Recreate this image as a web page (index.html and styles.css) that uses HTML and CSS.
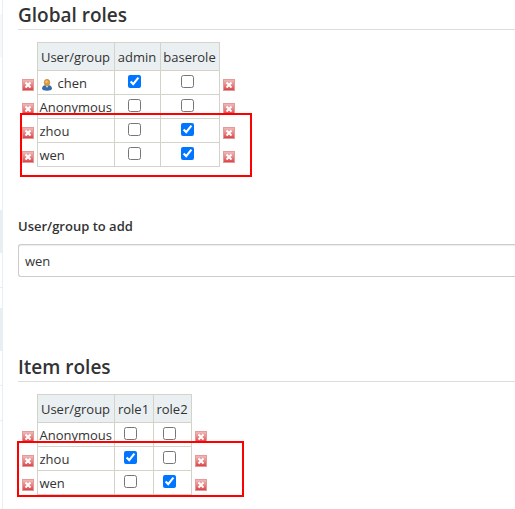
FILE: index.html
```
<!DOCTYPE html>
<html lang="en">
<head>
    <meta charset="UTF-8">
    <meta name="viewport" content="width=device-width, initial-scale=1.0">
    <title>Assign Roles</title>
    <link rel="stylesheet" href="styles.css">
</head>
<body>
    <!-- shared icons -->
    <svg class="sprite" aria-hidden="true">
        <defs>
            <linearGradient id="redFill" x1="0" y1="0" x2="0" y2="1">
                <stop offset="0" stop-color="#f0b8b8"/>
                <stop offset="0.5" stop-color="#e58585"/>
                <stop offset="1" stop-color="#dc4448"/>
            </linearGradient>
        </defs>
        <symbol id="remove" viewBox="0 0 12 12">
            <rect x="0" y="0" width="12" height="12" fill="#e59a9a"/>
            <rect x="1" y="1" width="10" height="10" fill="url(#redFill)"/>
            <path d="M3.500 3.500l5 5M8.500 3.500l-5 5" fill="none" stroke="#fff" stroke-width="2"/>
        </symbol>
        <symbol id="person" viewBox="0 0 12 12">
            <path d="M1 9.500C1 7 3 6 6 6s5 1 5 3.500C11 11 8.500 11.700 6 11.700S1 11 1 9.500z" fill="#3a6ca8"/>
            <path d="M4.500 6L6 9 7.500 6z" fill="#e8edf4"/>
            <ellipse cx="6" cy="3.500" rx="2.800" ry="3.200" fill="#dd9c3c" stroke="#b07a30" stroke-width="0.500"/>
            <ellipse cx="5.500" cy="2.800" rx="1.200" ry="1.200" fill="#f3c473"/>
        </symbol>
    </svg>

    <div class="page">
        <aside class="side-panel">
            <div class="side-gap first"></div>
            <div class="side-item faint"></div>
            <div class="side-gap large"></div>
            <div class="side-item"></div>
            <div class="side-row"></div>
            <div class="side-gap small"></div>
            <div class="side-item"></div>
            <div class="side-row"></div>
            <div class="side-row"></div>
        </aside>

        <main class="main-panel">
            <section class="roles">
                <h2>Global roles</h2>
                <div class="matrix">
                    <table class="global">
                        <colgroup>
                            <col class="col-icon"><col class="col-user"><col class="col-admin"><col class="col-base"><col class="col-icon">
                        </colgroup>
                        <thead>
                            <tr><td></td><th>User/group</th><th>admin</th><th>baserole</th><td></td></tr>
                        </thead>
                        <tbody>
                            <tr>
                                <td class="start"><button type="button" aria-label="Remove chen"><svg><use href="#remove"/></svg></button></td>
                                <td class="name"><svg class="person"><use href="#person"/></svg>chen</td>
                                <td class="check"><input type="checkbox" aria-label="admin for chen" checked></td>
                                <td class="check"><input type="checkbox" aria-label="baserole for chen"></td>
                                <td class="stop"><button type="button" aria-label="Remove chen"><svg><use href="#remove"/></svg></button></td>
                            </tr>
                            <tr>
                                <td class="start"><button type="button" aria-label="Remove Anonymous"><svg><use href="#remove"/></svg></button></td>
                                <td class="name">Anonymous</td>
                                <td class="check"><input type="checkbox" aria-label="admin for Anonymous"></td>
                                <td class="check"><input type="checkbox" aria-label="baserole for Anonymous"></td>
                                <td class="stop"><button type="button" aria-label="Remove Anonymous"><svg><use href="#remove"/></svg></button></td>
                            </tr>
                            <tr>
                                <td class="start"><button type="button" aria-label="Remove zhou"><svg><use href="#remove"/></svg></button></td>
                                <td class="name">zhou</td>
                                <td class="check"><input type="checkbox" aria-label="admin for zhou"></td>
                                <td class="check"><input type="checkbox" aria-label="baserole for zhou" checked></td>
                                <td class="stop"><button type="button" aria-label="Remove zhou"><svg><use href="#remove"/></svg></button></td>
                            </tr>
                            <tr>
                                <td class="start"><button type="button" aria-label="Remove wen"><svg><use href="#remove"/></svg></button></td>
                                <td class="name">wen</td>
                                <td class="check"><input type="checkbox" aria-label="admin for wen"></td>
                                <td class="check"><input type="checkbox" aria-label="baserole for wen" checked></td>
                                <td class="stop"><button type="button" aria-label="Remove wen"><svg><use href="#remove"/></svg></button></td>
                            </tr>
                        </tbody>
                    </table>
                    <div class="highlight highlight-global"></div>
                </div>
            </section>

            <div class="add-user">
                <label for="userToAdd">User/group to add</label>
                <input type="text" id="userToAdd" value="wen">
            </div>

            <section class="roles">
                <h2>Item roles</h2>
                <div class="matrix">
                    <table class="item">
                        <colgroup>
                            <col class="col-icon"><col class="col-user"><col class="col-role1"><col class="col-role2"><col class="col-icon">
                        </colgroup>
                        <thead>
                            <tr><td></td><th>User/group</th><th>role1</th><th>role2</th><td></td></tr>
                        </thead>
                        <tbody>
                            <tr>
                                <td class="start"><button type="button" aria-label="Remove Anonymous"><svg><use href="#remove"/></svg></button></td>
                                <td class="name">Anonymous</td>
                                <td class="check"><input type="checkbox" aria-label="role1 for Anonymous"></td>
                                <td class="check"><input type="checkbox" aria-label="role2 for Anonymous"></td>
                                <td class="stop"><button type="button" aria-label="Remove Anonymous"><svg><use href="#remove"/></svg></button></td>
                            </tr>
                            <tr>
                                <td class="start"><button type="button" aria-label="Remove zhou"><svg><use href="#remove"/></svg></button></td>
                                <td class="name">zhou</td>
                                <td class="check"><input type="checkbox" aria-label="role1 for zhou" checked></td>
                                <td class="check"><input type="checkbox" aria-label="role2 for zhou"></td>
                                <td class="stop"><button type="button" aria-label="Remove zhou"><svg><use href="#remove"/></svg></button></td>
                            </tr>
                            <tr>
                                <td class="start"><button type="button" aria-label="Remove wen"><svg><use href="#remove"/></svg></button></td>
                                <td class="name">wen</td>
                                <td class="check"><input type="checkbox" aria-label="role1 for wen"></td>
                                <td class="check"><input type="checkbox" aria-label="role2 for wen" checked></td>
                                <td class="stop"><button type="button" aria-label="Remove wen"><svg><use href="#remove"/></svg></button></td>
                            </tr>
                        </tbody>
                    </table>
                    <div class="highlight highlight-item"></div>
                </div>
            </section>
        </main>
    </div>
</body>
</html>
```
FILE: styles.css
```
* {
    box-sizing: border-box;
}

body {
    margin: 0;
    font-family: "Open Sans", "Noto Sans", sans-serif;
    font-size: 13px;
    line-height: 20px;
    color: #333;
    background-color: #fff;
}

.sprite {
    position: absolute;
    width: 0;
    height: 0;
}

.page {
    display: flex;
    min-height: 100vh;
}

/* edge of the side panel */
.side-panel {
    flex: 0 0 3px;
    border-right: 1px solid #e8eff2;
}

.side-item {
    height: 43px;
    background-color: #e8eff2;
}

.side-item.faint {
    background-color: #f6f8f9;
}

.side-gap.first {
    height: 14px;
}

.side-gap.large {
    height: 153px;
}

.side-gap.small {
    height: 20px;
}

.side-row {
    height: 35px;
    border-bottom: 1px solid #e8eff2;
}

.main-panel {
    flex: 1;
    min-width: 0;
    padding-left: 15px;
}

h2 {
    margin: 0 0 12px;
    padding: 1px 0 0;
    border-bottom: 1px solid #ddd;
    font-size: 19px;
    font-weight: 600;
    line-height: 28px;
}

.matrix {
    position: relative;
}

table {
    table-layout: fixed;
    border-collapse: collapse;
}

table.global {
    width: 220px;
}

table.item {
    width: 192px;
}

.col-icon {
    width: 19px;
}

.col-user {
    width: 77px;
}

.col-admin {
    width: 46px;
}

.col-base {
    width: 59px;
}

.col-role1 {
    width: 39px;
}

.col-role2 {
    width: 38px;
}

th,
td {
    height: 24px;
    padding: 0;
}

th {
    height: 28px;
    border: 1px solid #d3d3c9;
    background-color: #eaeff2;
    font-weight: 400;
    text-align: center;
}

.name,
.check {
    border: 1px solid #d3d3c9;
}

.name {
    padding-left: 2px;
    white-space: nowrap;
}

.check {
    padding-right: 5px;
    text-align: center;
}

.item .check {
    padding-right: 6px;
}

.check input {
    display: block;
    width: 13px;
    height: 13px;
    margin: 0 auto 3px;
}

.start,
.stop {
    padding-top: 4px;
}

.start {
    padding-left: 4px;
}

.stop {
    padding-left: 3px;
}

td button {
    display: block;
    width: 12px;
    height: 12px;
    padding: 0;
    border: 0;
    background: none;
    cursor: pointer;
}

td svg {
    display: block;
    width: 12px;
    height: 12px;
}

td svg.person {
    display: inline-block;
    margin: 0 5px 0 1px;
    vertical-align: -3px;
}

/* red frame over the changed rows */
.highlight {
    position: absolute;
    border: 2px solid #f00;
    pointer-events: none;
}

.highlight-global {
    top: 71px;
    left: 2px;
    width: 232px;
    height: 64px;
}

.highlight-item {
    top: 47px;
    left: -1px;
    width: 227px;
    height: 56px;
}

.add-user {
    margin: 49px 0 75px;
}

.add-user label {
    display: block;
    margin-bottom: 8px;
    font-weight: 600;
}

.add-user input {
    display: block;
    width: 100%;
    height: 33px;
    padding: 0 6px;
    border: 1px solid #ccc;
    border-right: 0;
    border-radius: 3px 0 0 3px;
    box-shadow: inset 0 1px 1px rgba(0, 0, 0, 0.075);
    font: inherit;
    color: #333;
}
```
